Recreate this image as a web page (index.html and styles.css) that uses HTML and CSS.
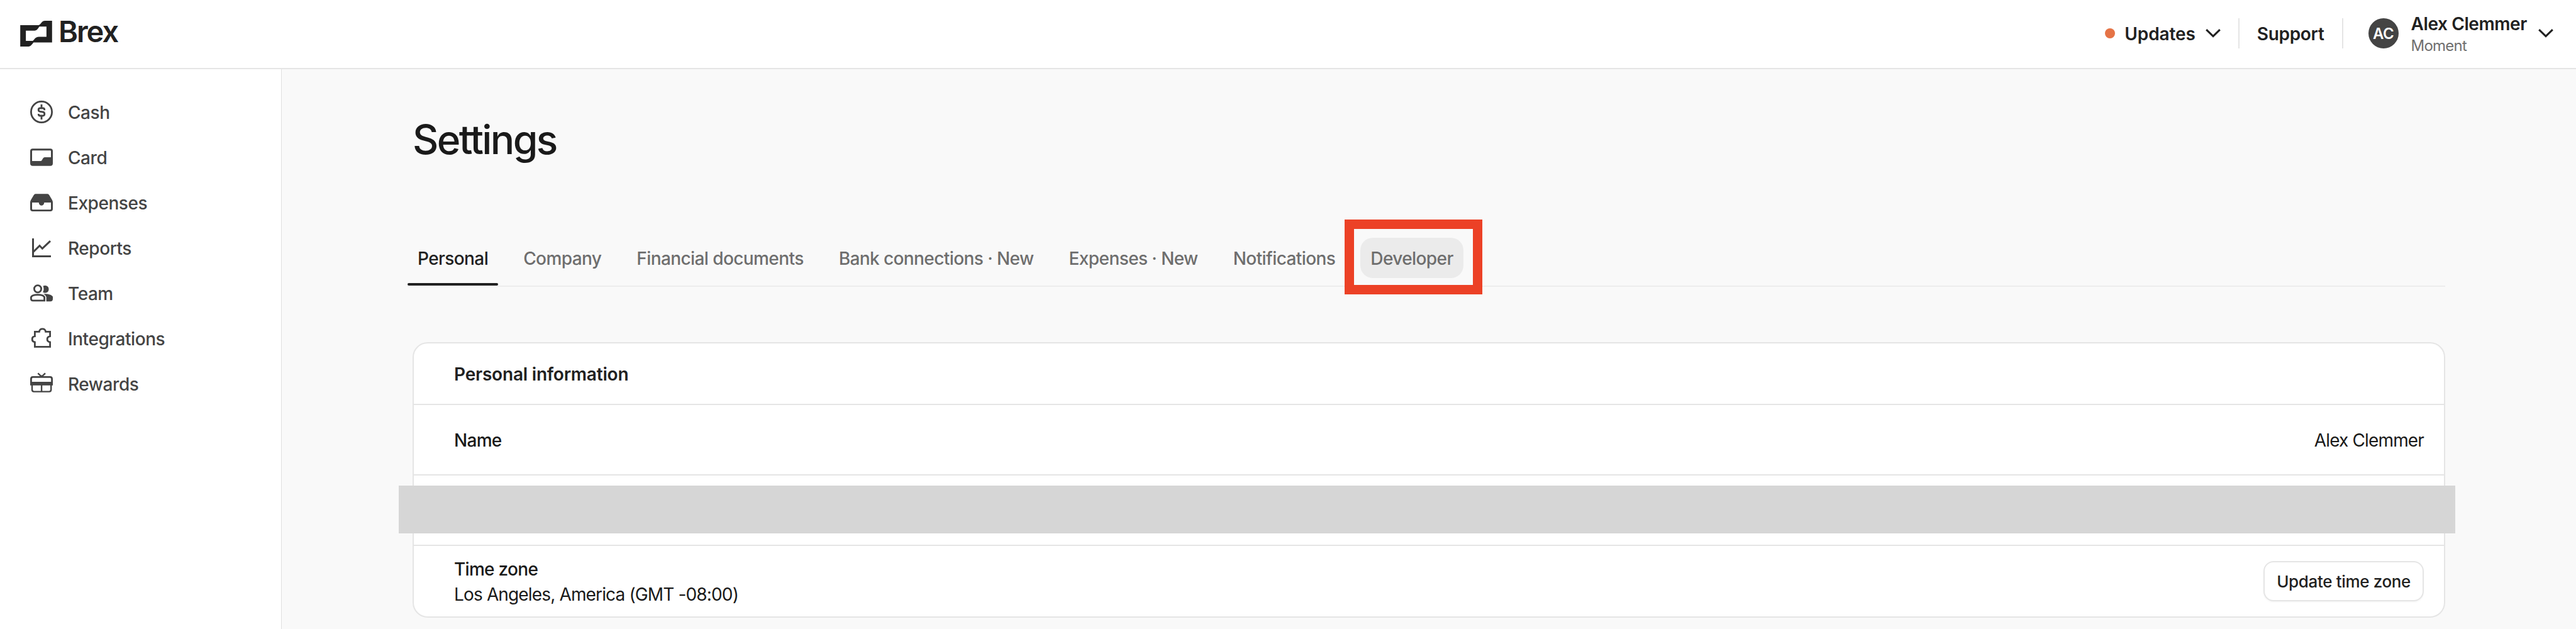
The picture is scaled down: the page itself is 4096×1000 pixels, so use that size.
FILE: index.html
```html
<!DOCTYPE html>
<html lang="en">
<head>
<meta charset="utf-8">
<title>Settings</title>
<link rel="stylesheet" href="styles.css">
</head>
<body>
<header class="topbar">
  <a class="brand">
    <svg class="brand-mark" viewBox="96 98 153 124"><path fill-rule="evenodd" d="M96 119H182C197 119 195 98 216 98H249V202H160C151 212 147 222 132 222H96ZM123 146V195H156C166 187 168 175 186 175H222V126H188C180 136 178 146 160 146Z"/></svg>
    <span class="brand-name">Brex</span>
  </a>
  <div class="topbar-right">
    <div class="updates"><span class="dot"></span><span class="link">Updates</span>
      <svg class="chevron" viewBox="0 0 24 14"><path d="M1.2 1.2 12 11.7 22.8 1.2"/></svg></div>
    <div class="support"><span class="link tight">Support</span></div>
    <div class="account">
      <span class="avatar">AC</span>
      <div class="who"><div class="who-name">Alex Clemmer</div><div class="who-org">Moment</div></div>
      <svg class="chevron" viewBox="0 0 24 14"><path d="M1.2 1.2 12 11.7 22.8 1.2"/></svg>
    </div>
  </div>
</header>
<div class="shell">
  <nav class="sidebar">
    <a class="nav-item"><svg class="icon" viewBox="0 0 36 36"><circle class="s" cx="18" cy="18" r="16.6"/><path class="s" d="M22.7 15.2V14.5Q22.7 12 20.2 12H15.8Q13.2 12 13.2 14.6T15.8 17.4L20 18Q22.8 18.4 22.8 21.2T20.2 24H15.8Q13.3 24 13.3 21.8V21M18 6v6M18 24v6"/></svg><span class="nav-label">Cash</span></a>
    <a class="nav-item"><svg class="icon" viewBox="0 0 36 36"><path fill-rule="evenodd" d="M4 4.3H32Q36 4.3 36 8.3V27.7Q36 31.7 32 31.7H4Q0 31.7 0 27.7V8.3Q0 4.3 4 4.3ZM4.2 7.3Q3 7.3 3 8.5V24H16.5C20 24 19 18 23.5 18H33V8.5Q33 7.3 31.8 7.3Z"/></svg><span class="nav-label">Card</span></a>
    <a class="nav-item"><svg class="icon" viewBox="0 0 36 36"><path fill-rule="evenodd" d="M8.5 4.3H27.5Q29.2 4.3 30.2 6L34.8 13.8Q36 16 36 18V28Q36 32 32 32H4Q0 32 0 28V18Q0 16 1.2 13.8L5.8 6Q6.8 4.3 8.5 4.3ZM3 18V28Q3 29.2 4.2 29.2H31.8Q33 29.2 33 28V18H22.3C22.3 24.3 13.7 24.3 13.7 18Z"/></svg><span class="nav-label">Expenses</span></a>
    <a class="nav-item"><svg class="icon" viewBox="0 0 36 36"><path class="s3" d="M4.5 3V31.5H33M5 24.5 15 14.6 19.3 19.2 32 7.2"/></svg><span class="nav-label">Reports</span></a>
    <a class="nav-item"><svg class="icon" viewBox="0 0 36 36"><circle class="s" cx="12" cy="11.3" r="5.6"/><path class="s" d="M1.4 24.5C3 19.3 21 19.3 22.6 24.5V29.9H4.4Q1.4 29.9 1.4 27Z"/><path d="M20.5 6.6C22.4 5.6 29.5 5 29.5 11.8S22.4 18.2 20.2 16.8Q22.6 12 20.5 6.6ZM21 19.3C28 18.8 34.5 20.5 36 23.8V27.3Q36 31.3 32 31.3H25.6V24Q24.8 21 21 19.3Z"/></svg><span class="nav-label">Team</span></a>
    <a class="nav-item"><svg class="icon" viewBox="0 0 36 36"><path class="s" d="M7.4 7.4H14.4C15.2 1.4 23.8 1.4 24.6 7.4H31.6V14.6C25.6 15.6 25.6 23 31.6 24V31.3H7.4V23.9C1.8 23.2 1.8 15.4 7.4 14.7Z"/></svg><span class="nav-label">Integrations</span></a>
    <a class="nav-item"><svg class="icon" viewBox="0 0 36 36"><path class="s" d="M1.4 19V10.4Q1.4 7.4 4.4 7.4H31.6Q34.6 7.4 34.6 10.4V19"/><path d="M0 15H36V20.7H0Z"/><path class="s thin" d="M3 19V27.6Q3 30.6 6 30.6H30.2Q33.2 30.6 33.2 27.6V19M18.1 19V31M12.3 1.3 17 5.8H19.4L24 1.3"/></svg><span class="nav-label">Rewards</span></a>
  </nav>
  <main class="content">
    <h1 class="title">Settings</h1>
    <div class="tabs">
      <a class="tab active">Personal</a>
      <a class="tab">Company</a>
      <a class="tab">Financial documents</a>
      <a class="tab">Bank connections · New</a>
      <a class="tab">Expenses · New</a>
      <a class="tab">Notifications</a>
      <a class="tab hovered">Developer<span class="highlight"></span></a>
    </div>
    <section class="card">
      <div class="row head">Personal information</div>
      <div class="row"><div class="text label">Name</div><div class="text value">Alex Clemmer</div></div>
      <div class="row"><span class="redaction"></span></div>
      <div class="row"><div class="text"><div class="label">Time zone</div><div class="value">Los Angeles, America (GMT -08:00)</div></div><button class="button">Update time zone</button></div>
    </section>
  </main>
</div>
</body>
</html>
```
FILE: styles.css
```css
* { box-sizing: border-box; }
body {
  margin: 0;
  height: 1000px;
  overflow: hidden;
  display: flex;
  flex-direction: column;
  font: 400 28px/40px Inter, "Liberation Sans", sans-serif;
  color: #1a1a1a;
  background: #f9f9f9;
  white-space: nowrap;
}

/* Top bar */
.topbar {
  flex: none;
  height: 110px;
  padding: 0 36px 0 32px;
  display: flex;
  justify-content: space-between;
  background: #fff;
  border-bottom: 2px solid #e5e5e5;
}
.brand { display: flex; align-items: flex-start; gap: 10px; padding-top: 33px; color: #212121; }
.brand-mark { width: 51px; height: 41px; fill: #212121; }
.brand-name { font-size: 47px; font-weight: 600; line-height: 34px; letter-spacing: -2px; }
.topbar-right { display: flex; align-items: center; height: 106px; color: #212121; }
.link { padding-top: 2px; font-weight: 600; letter-spacing: -0.1px; }
.tight { letter-spacing: -0.3px; }
.updates { display: flex; align-items: center; height: 48px; padding-right: 28px; border-right: 2px solid #e5e5e5; }
.dot { width: 16px; height: 16px; margin-right: 15px; border-radius: 50%; background: #e57346; }
.chevron { width: 24px; height: 14px; fill: none; stroke: #212121; stroke-width: 3; }
.updates .chevron { margin-left: 16px; }
.support { display: flex; align-items: center; height: 48px; padding: 0 28px; border-right: 2px solid #e5e5e5; }
.account { display: flex; align-items: center; padding-left: 40px; }
.avatar {
  width: 48px;
  height: 48px;
  border-radius: 50%;
  background: #444;
  color: #fff;
  font-size: 24px;
  font-weight: 600;
  line-height: 49px;
  letter-spacing: -0.5px;
  text-align: center;
}
.who { margin-left: 20px; padding-top: 4px; }
.who-name { font-weight: 600; line-height: 36px; letter-spacing: -0.4px; }
.who-org { font-size: 24px; line-height: 34px; letter-spacing: -0.76px; color: #707070; }
.account .chevron { margin-left: 18px; }

/* Sidebar */
.shell { flex: 1; display: flex; }
.sidebar { flex: none; width: 448px; padding: 32px 48px; background: #fff; border-right: 1px solid #e0e0e0; }
.nav-item { display: flex; align-items: center; gap: 24px; height: 72px; color: #444; font-weight: 500; letter-spacing: -0.45px; }
.nav-label { padding-top: 2px; }
.icon { width: 36px; height: 36px; fill: #444; overflow: visible; }
.icon .s, .icon .s3 { fill: none; stroke: #444; stroke-width: 2.8; }
.icon .s3 { stroke-width: 3; }
.icon .thin { stroke-width: 2.4; }

/* Page content */
.content { flex: 1; padding: 72px 208px 0; }
.title { margin: 0; font-size: 64px; font-weight: 500; line-height: 80px; letter-spacing: -2.6px; }
.tabs {
  display: flex;
  gap: 24px;
  margin: 116px 0 88px -8px;
  padding-bottom: 12px;
  border-bottom: 2px solid #ededed;
}
.tab { position: relative; height: 64px; padding: 0 16px; line-height: 66px; font-weight: 500; letter-spacing: -0.59px; color: #6e6e6e; }
.active { color: #212121; }
.active::after {
  content: "";
  position: absolute;
  left: 0;
  right: 0;
  bottom: -12px;
  height: 4px;
  border-radius: 2px;
  background: #212121;
}
.hovered { border-radius: 20px; background: #ebebeb; }
.highlight { position: absolute; inset: -29px -30px -26px -25px; border: 15px solid #ec4126; }

/* Details card */
.card { border: 2px solid #e5e5e5; border-radius: 24px; background: #fff; }
.row {
  position: relative;
  display: flex;
  align-items: center;
  justify-content: space-between;
  height: 112px;
  padding: 0 32px 0 64px;
  border-top: 2px solid #e5e5e5;
}
.row:last-child { height: 114px; }
.head { height: 96px; padding-top: 2px; border-top: 0; font-weight: 600; letter-spacing: -0.2px; color: #212121; }
.text { padding-top: 2px; }
.label { font-weight: 500; letter-spacing: -0.7px; }
.value { letter-spacing: -0.85px; }
.redaction { position: absolute; left: -24px; right: -18px; top: 16px; height: 76px; background: #d6d6d6; }
.button {
  height: 64px;
  padding: 2px 19px 0;
  border: 2px solid #e5e5e5;
  border-radius: 16px;
  background: #fff;
  box-shadow: 0 2px 2px rgba(0, 0, 0, 0.03);
  font: 500 26px/36px Inter, sans-serif;
  letter-spacing: -0.35px;
  color: #212121;
}
```
